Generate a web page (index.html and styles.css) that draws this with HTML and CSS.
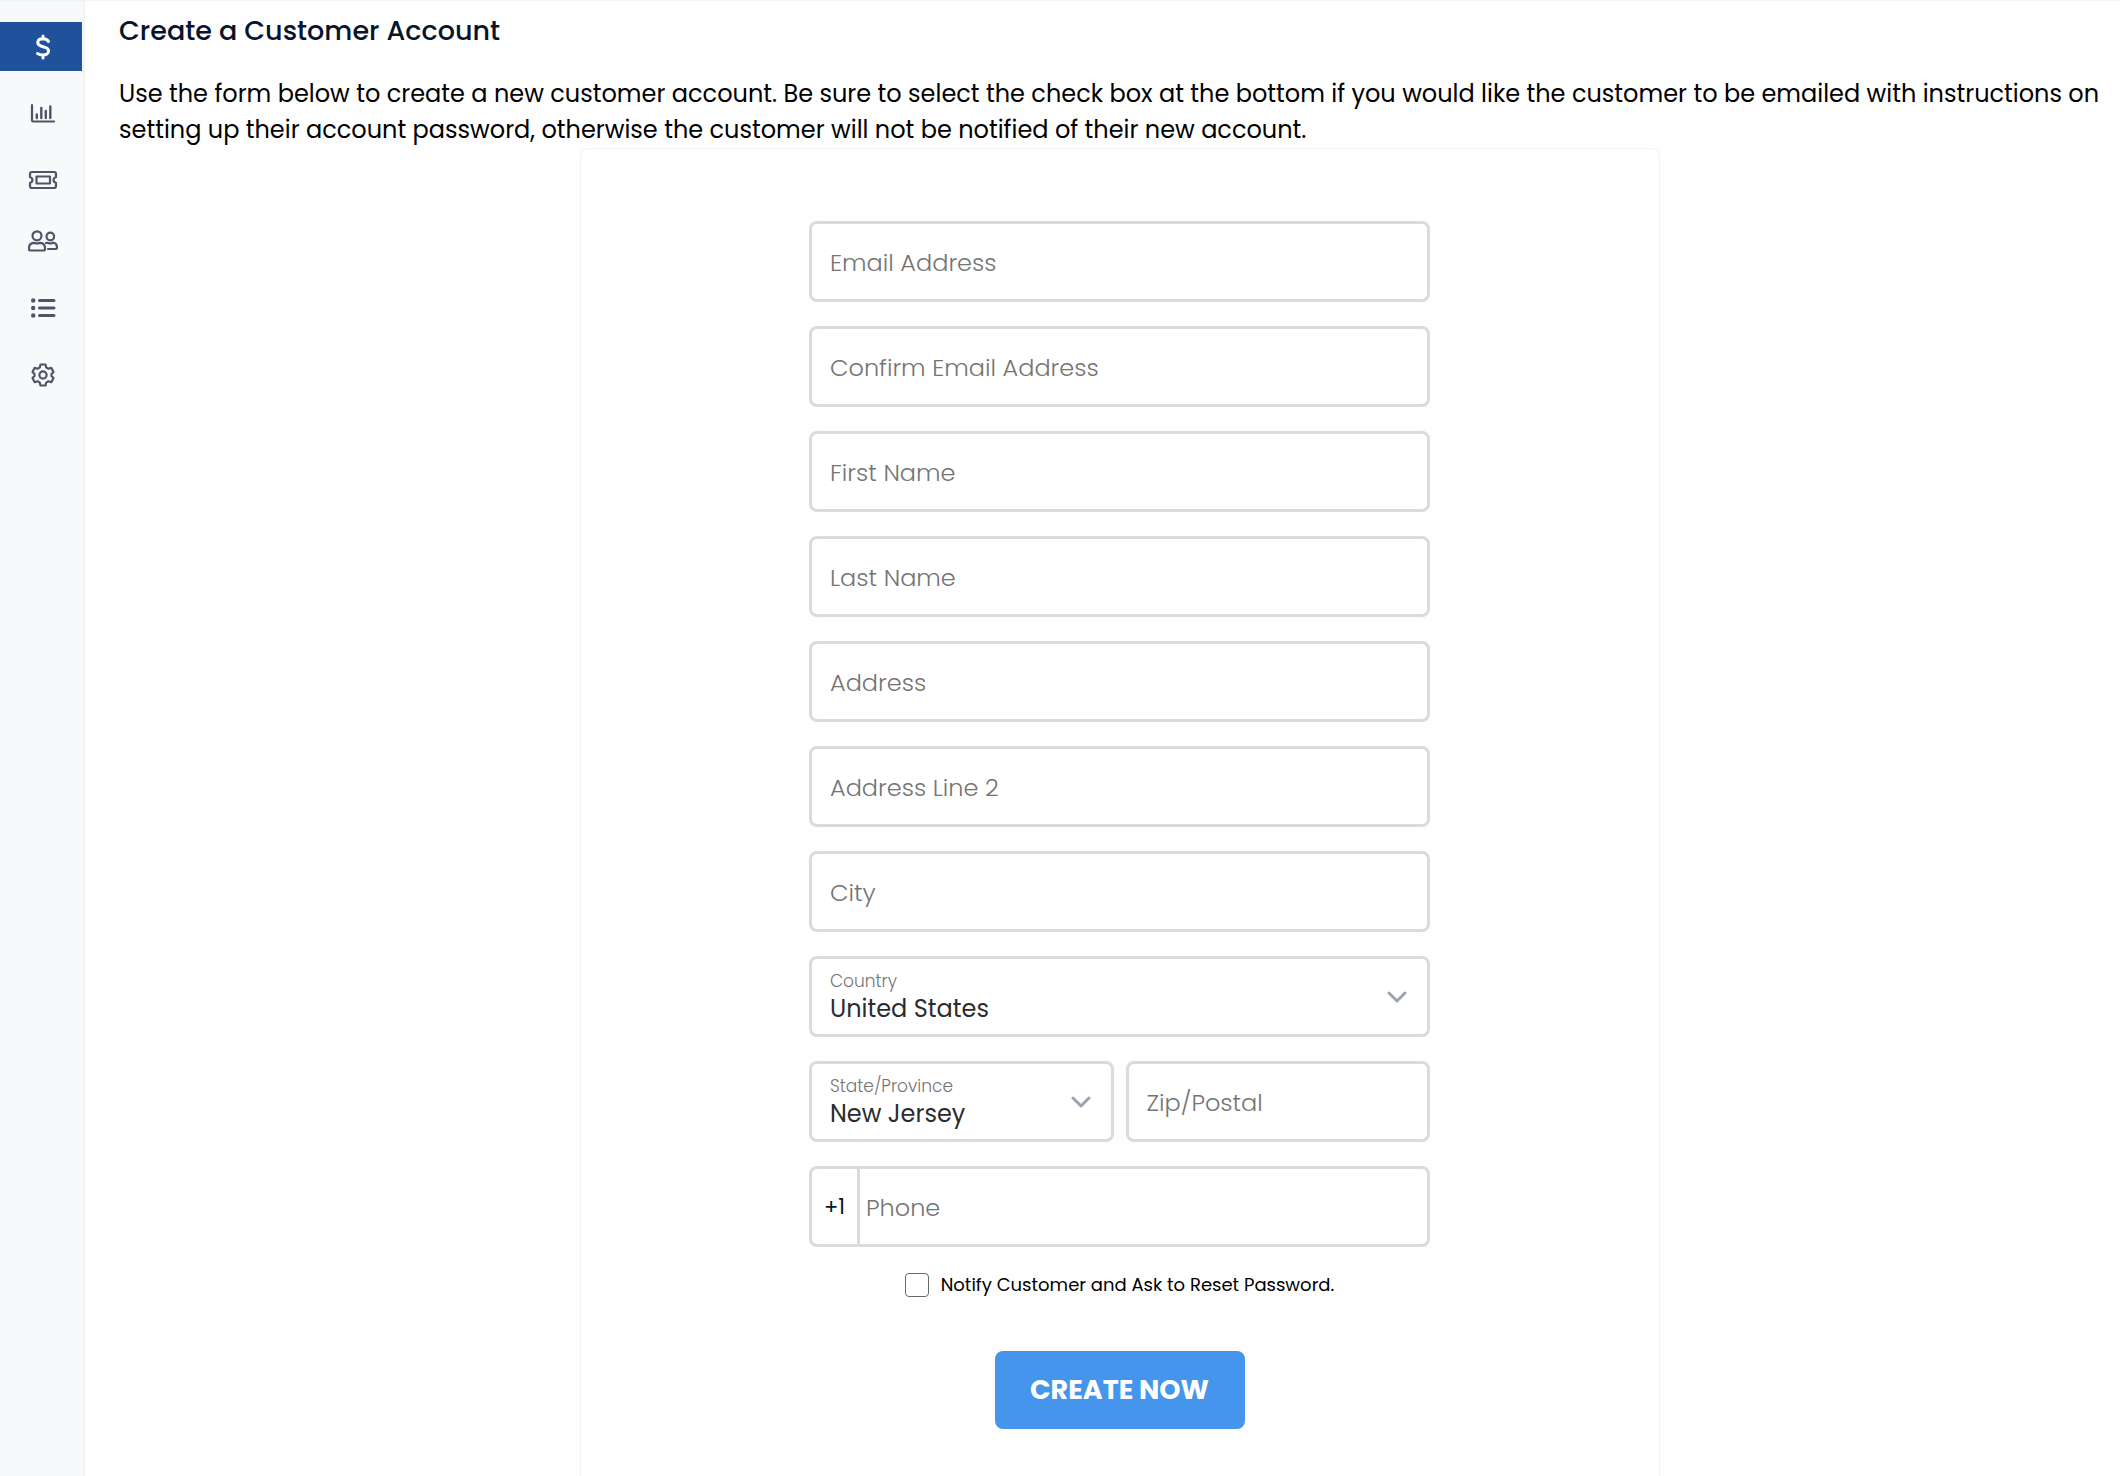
FILE: index.html
```html
<!DOCTYPE html>
<html lang="en">
<head>
  <meta charset="UTF-8" />
  <meta name="viewport" content="width=device-width, initial-scale=1" />
  <title>Create a Customer Account</title>
  <link rel="stylesheet" href="styles.css">
</head>

<body>
  <div class="layout">
    <!-- Sidebar -->
    <nav class="sidebar">
      <div class="nav-group">
        <a class="nav-item active" href="#sales">
          <svg viewBox="0 0 30 30" width="30" height="30">
            <path class="bold" d="M15 4V7M15 23V26M20.500 9.500C19.500 7.500 17.500 6.800 15 6.800C12 6.800 9.800 8.200 9.800 10.600C9.800 13.200 12 14 15 14.700C18 15.400 20.600 16.300 20.600 19C20.600 21.500 18 23 15 23C12.300 23 10.800 22.500 9.500 21.500" />
          </svg>
        </a>
        <a class="nav-item" href="#reports">
          <svg viewBox="0 0 30 30" width="30" height="30">
            <path d="M4 6V21.300Q4 22.500 5.200 22.500H26" />
            <path class="bar" d="M8.800 19V15.500M13.300 19V9M17.800 19V12M22.300 19V7.500" />
          </svg>
        </a>
        <a class="nav-item" href="#tickets">
          <svg viewBox="0 0 30 30" width="30" height="30">
            <path d="M4 6H26Q28 6 28 8V11Q25.500 12 25.500 14T28 17V20Q28 22 26 22H4Q2 22 2 20V17Q4.500 16 4.500 14T2 11V8Q2 6 4 6Z" />
            <rect x="8.500" y="10.500" width="13.500" height="7" />
          </svg>
        </a>
      </div>
      <div class="nav-group">
        <a class="nav-item" href="#customers">
          <svg viewBox="0 0 30 30" width="30" height="30">
            <circle cx="9" cy="8.800" r="4.500" />
            <path d="M5.500 15.800C7 15.800 7.500 16.500 9 16.500S11 15.800 12.500 15.800Q17 16.300 17 21V22Q17 23.500 15.500 23.500H2.500Q1 23.500 1 22V21Q1 16.300 5.500 15.800Z" />
            <circle cx="22.300" cy="9.500" r="3.800" />
            <path d="M18 16C20 15.500 20.500 16.500 22.300 16.500S24 15.500 25.500 15.700Q29 16.500 29 20V20.500Q29 22 27.500 22H20" />
          </svg>
        </a>
        <a class="nav-item" href="#lists">
          <svg viewBox="0 0 30 30" width="30" height="30">
            <path class="line" d="M11.500 6.500H26M11.500 14H26M11.500 21.500H26" />
            <circle class="dot" cx="5.200" cy="6.500" r="2.200" />
            <circle class="dot" cx="5.200" cy="14" r="2.200" />
            <circle class="dot" cx="5.200" cy="21.500" r="2.200" />
          </svg>
        </a>
        <a class="nav-item" href="#settings">
          <svg viewBox="0 0 30 30" width="30" height="30">
            <path d="M12.500 3.500H17.500L18.200 6.400L20.400 7.700L23.300 6.800L25.500 10.900L23.500 13V15L25.500 17.100L23.300 21.200L20.400 20.300L18.200 21.600L17.500 24.500H12.500L11.800 21.600L9.600 20.300L6.700 21.200L4.500 17.100L6.500 15V13L4.500 10.900L6.700 6.800L9.600 7.700L11.800 6.400Z" />
            <circle cx="15" cy="14" r="3.600" />
          </svg>
        </a>
      </div>
    </nav>

    <!-- Main content -->
    <main class="content">
      <h1>Create a Customer Account</h1>
      <p class="intro">Use the form below to create a new customer account. Be sure to select the check box at the bottom if you would like the customer to be emailed with instructions on setting up their account password, otherwise the customer will not be notified of their new account.</p>

      <div class="card">
        <form class="account-form">
          <div class="field">
            <input type="email" id="email">
            <label for="email">Email Address</label>
          </div>
          <div class="field">
            <input type="email" id="confirmEmail">
            <label for="confirmEmail">Confirm Email Address</label>
          </div>
          <div class="field">
            <input type="text" id="firstName">
            <label for="firstName">First Name</label>
          </div>
          <div class="field">
            <input type="text" id="lastName">
            <label for="lastName">Last Name</label>
          </div>
          <div class="field">
            <input type="text" id="address">
            <label for="address">Address</label>
          </div>
          <div class="field">
            <input type="text" id="address2">
            <label for="address2">Address Line 2</label>
          </div>
          <div class="field">
            <input type="text" id="city">
            <label for="city">City</label>
          </div>
          <div class="field select-field">
            <select id="country">
              <option>United States</option>
            </select>
            <label for="country">Country</label>
            <svg class="chevron" viewBox="0 0 20 14" width="20" height="14"><path d="M2 3L10 11L18 3" /></svg>
          </div>
          <div class="row">
            <div class="field select-field">
              <select id="state">
                <option>New Jersey</option>
              </select>
              <label for="state">State/Province</label>
              <svg class="chevron" viewBox="0 0 20 14" width="20" height="14"><path d="M2 3L10 11L18 3" /></svg>
            </div>
            <div class="field">
              <input type="text" id="zip">
              <label for="zip">Zip/Postal</label>
            </div>
          </div>
          <div class="field phone-field">
            <span class="prefix">+1</span>
            <input type="tel" id="phone">
            <label for="phone">Phone</label>
          </div>

          <div class="notify">
            <input type="checkbox" id="notify">
            <label for="notify">Notify Customer and Ask to Reset Password.</label>
          </div>
          <button class="create-btn" type="submit">CREATE NOW</button>
        </form>
      </div>
    </main>
  </div>
</body>
</html>
```
FILE: styles.css
```css
* {
  box-sizing: border-box;
}

body {
  margin: 0;
  font-family: Poppins, Inter, sans-serif;
  background: #fefefe;
  color: #000;
}

.layout {
  display: flex;
  min-height: 100vh;
  border-top: 1px solid #f3f3f4;
}

/* Sidebar */
.sidebar {
  flex: none;
  width: 85px;
  padding-top: 21px;
  display: flex;
  flex-direction: column;
  gap: 12px;
  background: #f8f9fb;
  border-right: 2px solid #f2f3f6;
}

.nav-group {
  display: flex;
  flex-direction: column;
  gap: 18px;
}

.nav-item {
  display: flex;
  align-items: center;
  width: 82px;
  height: 49px;
  padding-left: 28px;
  color: #4f5565;
}

.nav-item.active {
  background: #1f529a;
  color: #fff;
}

.nav-item svg {
  fill: none;
  stroke: currentColor;
  stroke-width: 2.2;
  stroke-linecap: round;
  stroke-linejoin: round;
}

.nav-item .bold {
  stroke-width: 3;
}

.nav-item .bar {
  stroke-width: 2.4;
}

.nav-item .line {
  stroke-width: 3;
}

.nav-item .dot {
  fill: currentColor;
  stroke: none;
}

/* Content */
.content {
  flex: 1;
  display: flex;
  flex-direction: column;
  padding-left: 34px;
}

h1 {
  margin: 12px 0 0;
  font-size: 27px;
  line-height: 36px;
  font-weight: 500;
  color: #07142b;
}

.intro {
  margin: 27px 0 0;
  font-size: 24px;
  line-height: 36px;
}

.card {
  flex: 1;
  width: 100%;
  max-width: 1080px;
  margin: 0 auto;
  padding: 72px 24px 47px;
  border: 1px solid #f3f3f3;
  border-bottom: none;
  border-radius: 8px 8px 0 0;
}

.account-form {
  display: flex;
  flex-direction: column;
  gap: 24px;
  max-width: 621px;
  margin: 0 auto;
}

.field {
  display: grid;
  align-items: center;
  flex: 1;
  height: 81px;
  position: relative;
  border: 3px solid #dbdbdb;
  border-radius: 8px;
  background: #fff;
}

.field input,
.field select {
  grid-area: 1 / 1;
  width: 100%;
  height: 75px;
  min-width: 0;
  padding: 24px 18px 0;
  border: none;
  border-radius: 6px;
  outline: none;
  background: none;
  font-family: inherit;
  font-size: 24px;
  color: #2c2c2e;
}

.field label {
  grid-area: 1 / 1;
  padding: 3px 18px 0;
  font-size: 24px;
  line-height: 32px;
  font-weight: 300;
  color: #747474;
  pointer-events: none;
}

.account-form > .field {
  flex: none;
}

.field:focus-within {
  border-color: #4495eb;
}

.select-field select {
  appearance: none;
}

.select-field label {
  align-self: start;
  padding-top: 12px;
  font-size: 17px;
  line-height: 20px;
}

.chevron {
  position: absolute;
  right: 20px;
  top: 31px;
  fill: none;
  stroke: #9ba3b3;
  stroke-width: 3;
  stroke-linecap: round;
  stroke-linejoin: round;
  pointer-events: none;
}

.row {
  display: flex;
  gap: 12px;
}

.phone-field {
  grid-template-columns: 48px 1fr;
}

.phone-field input,
.phone-field label {
  grid-area: 1 / 2;
  padding-left: 6px;
}

.prefix {
  display: flex;
  align-items: center;
  justify-content: center;
  height: 75px;
  border-right: 3px solid #dbdbdb;
  font-size: 21px;
  color: #07142b;
}

.notify {
  display: flex;
  align-items: center;
  justify-content: center;
  gap: 12px;
  margin-top: 2px;
  font-size: 18px;
  line-height: 24px;
}

.notify input {
  appearance: none;
  width: 24px;
  height: 24px;
  margin: 0;
  border: 1px solid #6a6a6a;
  border-radius: 4px;
  background: #fff;
}

.notify input:checked {
  background: #4495eb;
}

.create-btn {
  align-self: center;
  width: 250px;
  height: 78px;
  margin-top: 30px;
  border: none;
  border-radius: 8px;
  background: #4495eb;
  color: #fff;
  font-family: inherit;
  font-size: 27px;
  font-weight: 700;
  cursor: pointer;
}
```
